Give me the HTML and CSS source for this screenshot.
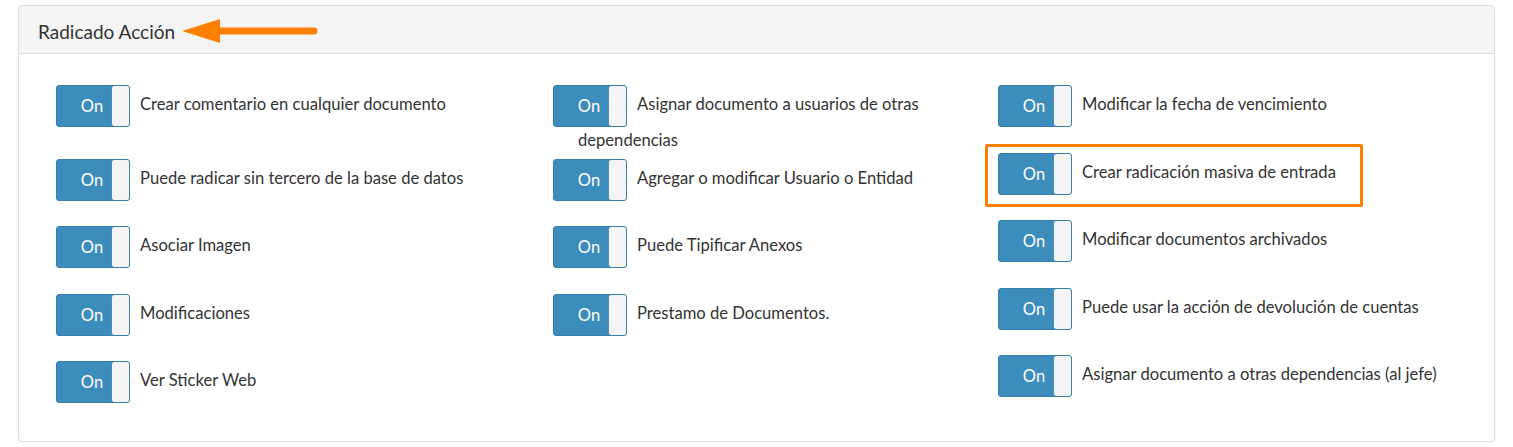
FILE: index.html
```html
<!DOCTYPE html>
<html lang="es">

<head>
    <meta charset="UTF-8">
    <meta name="viewport" content="width=device-width, initial-scale=1.0">
    <title>Radicado Acción</title>
    <link rel="stylesheet" href="styles.css">
</head>

<body>
    <div class="page">
        <div class="box">
            <div class="box-header">
                <h3 class="box-title">Radicado Acción</h3>
                <svg class="arrow" width="140" height="26" viewBox="0 0 140 26">
                    <polygon points="0,13 38,1 38,25" fill="#ff8000" />
                    <line x1="34" y1="13" x2="132" y2="13" stroke="#ff8000" stroke-width="7" stroke-linecap="round" />
                </svg>
            </div>

            <div class="box-body">
                <div class="pair">
                    <div class="checkbox">
                        <label><span class="toggle"><span class="toggle-on">On</span><span class="toggle-handle"></span></span>Crear comentario en cualquier documento</label>
                    </div>
                    <div class="checkbox">
                        <label><span class="toggle"><span class="toggle-on">On</span><span class="toggle-handle"></span></span>Asignar documento a usuarios de otras dependencias</label>
                    </div>
                    <div class="checkbox">
                        <label><span class="toggle"><span class="toggle-on">On</span><span class="toggle-handle"></span></span>Puede radicar sin tercero de la base de datos</label>
                    </div>
                    <div class="checkbox">
                        <label><span class="toggle"><span class="toggle-on">On</span><span class="toggle-handle"></span></span>Agregar o modificar Usuario o Entidad</label>
                    </div>
                    <div class="checkbox">
                        <label><span class="toggle"><span class="toggle-on">On</span><span class="toggle-handle"></span></span>Asociar Imagen</label>
                    </div>
                    <div class="checkbox">
                        <label><span class="toggle"><span class="toggle-on">On</span><span class="toggle-handle"></span></span>Puede Tipificar Anexos</label>
                    </div>
                    <div class="checkbox">
                        <label><span class="toggle"><span class="toggle-on">On</span><span class="toggle-handle"></span></span>Modificaciones</label>
                    </div>
                    <div class="checkbox">
                        <label><span class="toggle"><span class="toggle-on">On</span><span class="toggle-handle"></span></span>Prestamo de Documentos.</label>
                    </div>
                    <div class="checkbox">
                        <label><span class="toggle"><span class="toggle-on">On</span><span class="toggle-handle"></span></span>Ver Sticker Web</label>
                    </div>
                </div>

                <div class="right-col">
                    <div class="checkbox">
                        <label><span class="toggle"><span class="toggle-on">On</span><span class="toggle-handle"></span></span>Modificar la fecha de vencimiento</label>
                    </div>
                    <div class="checkbox marked">
                        <label><span class="toggle"><span class="toggle-on">On</span><span class="toggle-handle"></span></span>Crear radicación masiva de entrada</label>
                    </div>
                    <div class="checkbox">
                        <label><span class="toggle"><span class="toggle-on">On</span><span class="toggle-handle"></span></span>Modificar documentos archivados</label>
                    </div>
                    <div class="checkbox">
                        <label><span class="toggle"><span class="toggle-on">On</span><span class="toggle-handle"></span></span>Puede usar la acción de devolución de cuentas</label>
                    </div>
                    <div class="checkbox">
                        <label><span class="toggle"><span class="toggle-on">On</span><span class="toggle-handle"></span></span>Asignar documento a otras dependencias (al jefe)</label>
                    </div>
                </div>
            </div>
        </div>
    </div>
</body>

</html>
```

FILE: styles.css
```css
body {
    margin: 0;
    background-color: #ffffff;
    font-family: Lato, "Noto Sans", sans-serif;
    color: #333333;
}

.page {
    padding: 5px 18px 0px;
}

.box {
    border: 1px solid #dddddd;
    border-radius: 4px;
    box-shadow: 0 1px 2px rgba(0, 0, 0, 0.08);
    height: 437px;
    box-sizing: border-box;
}

.box-header {
    height: 47px;
    background-color: #f4f4f4;
    border-bottom: 1px solid #dddddd;
    border-radius: 4px 4px 0 0;
    display: flex;
    flex-direction: row;
    align-items: center;
    padding-left: 19px;
}

.box-title {
    margin: 0px;
    font-size: 19px;
    font-weight: 400;
    color: #333333;
    padding-top: 4px;
}

.arrow {
    margin-left: 7px;
    margin-top: 3px;
}

.box-body {
    display: flex;
    flex-direction: row;
    padding: 31px 0px 0px 37px;
}

.pair {
    display: grid;
    grid-template-columns: 497px 445px;
    grid-template-rows: 48px repeat(4, 42px);
    row-gap: 25.5px;
}

.right-col {
    display: flex;
    flex-direction: column;
    gap: 25.5px;
}

.checkbox {
    position: relative;
    height: 42px;
}

.checkbox label {
    display: block;
    padding-left: 25px;
    padding-right: 15px;
    font-size: 16.6px;
    line-height: 26px;
}

.toggle {
    display: inline-flex;
    width: 74px;
    height: 42px;
    box-sizing: border-box;
    margin-left: -25px;
    margin-right: 10px;
    vertical-align: middle;
    border: 1px solid #367fa9;
    border-radius: 3px;
    background-color: #3c8dbc;
    overflow: hidden;
}

.toggle-on {
    flex: 1;
    color: #ffffff;
    text-align: center;
    line-height: 41px;
    padding-left: 16px;
    font-size: 16.5px;
}

.toggle-handle {
    width: 17px;
    background-color: #f4f4f4;
    border-radius: 3px 0 0 3px;
    border-left: 1px solid #4a8fb8;
}

.marked::after {
    content: "";
    position: absolute;
    left: -13px;
    top: -9px;
    width: 378px;
    height: 63px;
    box-sizing: border-box;
    border: 3px solid #ff8000;
    border-radius: 2px;
}
```
